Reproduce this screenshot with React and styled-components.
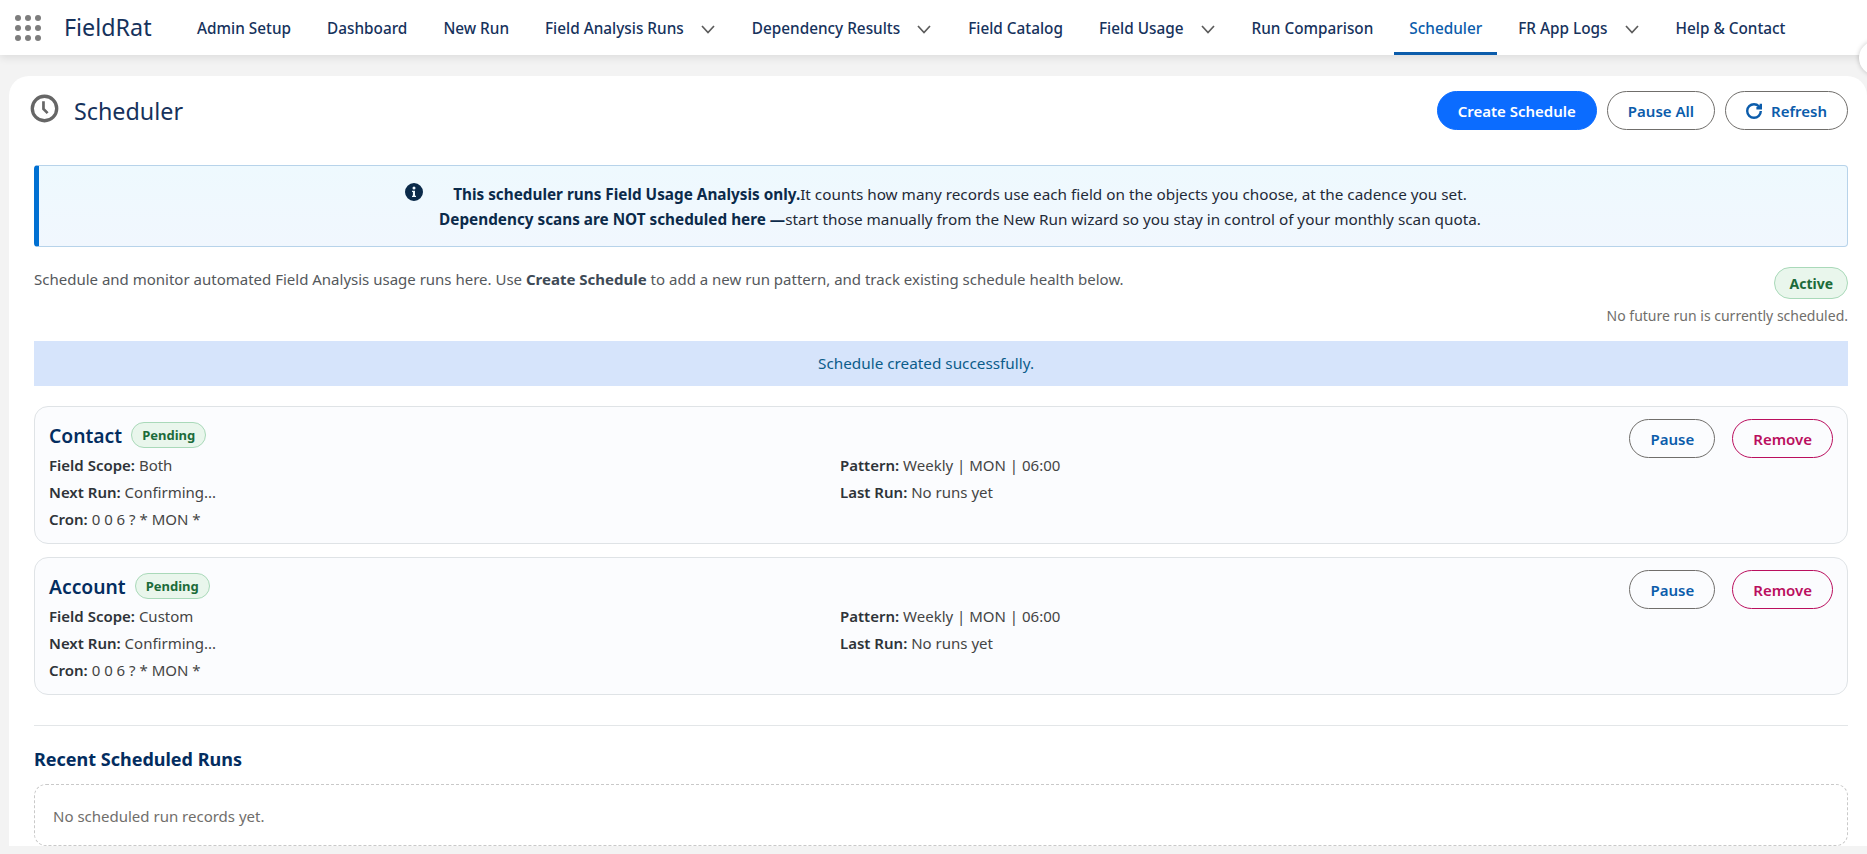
import styled, { createGlobalStyle } from 'styled-components';

const GlobalStyle = createGlobalStyle`
  html, body {
    margin: 0;
    height: 100%;
    overflow: hidden;
  }
  body {
    background: #f3f3f3;
    font-family: "Noto Sans", "Open Sans", sans-serif;
    font-size: 15px;
    color: #181818;
  }
  * {
    box-sizing: border-box;
  }
`;

const TopBar = styled.header`
  display: flex;
  align-items: center;
  height: 55px;
  padding-left: 15px;
  background: #ffffff;
  box-shadow: 0 3px 8px rgba(0, 0, 0, 0.09);
`;

const AppLauncher = styled.svg`
  width: 26px;
  height: 26px;
  margin-right: 23px;
  fill: #7d7d7d;
`;

const AppName = styled.span`
  width: 118px;
  font-size: 23.3px;
  line-height: 1;
  color: #16325c;
`;

const NavList = styled.nav`
  display: flex;
  align-items: stretch;
  height: 55px;
`;

const NavItem = styled.a`
  display: flex;
  align-items: center;
  gap: 16px;
  padding: 0 15px;
  margin-right: 6px;
  font-size: 15.33px;
  font-weight: 500;
  color: ${(p) => (p.$active ? '#0b5cab' : '#16325c')};
  box-shadow: ${(p) => (p.$active ? 'inset 0 -3px 0 #0b5cab' : 'none')};
  white-space: nowrap;

  svg {
    width: 16px;
    height: 16px;
    color: #5c5c5c;
    margin-top: 3px;
  }
`;

const EdgeHandle = styled.div`
  position: fixed;
  top: 41px;
  right: -26px;
  width: 34px;
  height: 34px;
  border-radius: 50%;
  background: #ffffff;
  box-shadow: 0 0 5px rgba(0, 0, 0, 0.22);
`;

const Panel = styled.main`
  margin: 21px 0 0 9px;
  padding: 15px 19px 0 25px;
  background: #ffffff;
  border-radius: 20px 20px 0 0;
`;

const PanelHeader = styled.div`
  display: flex;
  align-items: center;
  justify-content: space-between;
  margin-bottom: 35px;
`;

const TitleGroup = styled.div`
  display: flex;
  align-items: center;
  gap: 15px;
  margin-left: -4px;
`;

const ClockIcon = styled.svg`
  width: 29px;
  height: 29px;
  margin-top: -4px;
`;

const PageTitle = styled.h1`
  margin: 0;
  font-size: 23.3px;
  font-weight: 400;
  color: #16325c;
`;

const ButtonRow = styled.div`
  display: flex;
  align-items: center;
  gap: ${(p) => p.$gap || 10}px;
`;

const CardActions = styled(ButtonRow)`
  align-self: flex-start;
`;

const PillButton = styled.button`
  display: inline-flex;
  align-items: center;
  justify-content: center;
  gap: 9px;
  height: 39px;
  padding: 0 20px;
  border-radius: 20px;
  border: 1px solid ${(p) => (p.$danger ? '#ba0f5e' : p.$primary ? '#0b6cff' : '#706e6b')};
  background: ${(p) => (p.$primary ? '#0b6cff' : 'transparent')};
  color: ${(p) => (p.$primary ? '#ffffff' : p.$danger ? '#ba0f5e' : '#0b5cab')};
  font-family: inherit;
  font-size: 15px;
  font-weight: 600;
  white-space: nowrap;
`;

const InfoBanner = styled.div`
  display: flex;
  justify-content: center;
  gap: 16px;
  height: 82px;
  padding-top: 16px;
  border: 1px solid #b7d3ea;
  border-left: 5px solid #0070d2;
  border-radius: 4px;
  background: linear-gradient(180deg, #eef9fe, #f1f7fe);
  color: #1f2a37;
  font-size: 15.3px;
  line-height: 25px;
  text-align: center;
`;

const InfoIcon = styled.svg`
  width: 18px;
  height: 18px;
  flex: none;
  fill: #0b2a4a;
  margin-top: 1px;
`;

const Strong = styled.b`
  font-weight: 700;
  color: ${(p) => p.$tone || '#0b2a4a'};
`;

const SummaryRow = styled.div`
  display: flex;
  justify-content: space-between;
  align-items: flex-start;
  height: 94px;
  padding-top: 20px;
`;

const Summary = styled.p`
  margin: 2px 0 0;
  font-size: 15px;
  line-height: 20px;
  color: #54585c;
`;

const StatusColumn = styled.div`
  display: flex;
  flex-direction: column;
  align-items: flex-end;
  gap: 7px;
`;

const Badge = styled.span`
  display: inline-flex;
  align-items: center;
  height: ${(p) => (p.$small ? 26 : 32)}px;
  padding: 0 ${(p) => (p.$small ? 10 : 14)}px;
  border: 1px solid #a9d9b9;
  border-radius: 16px;
  background: #e9f6ec;
  color: #1c6b3a;
  font-size: ${(p) => (p.$small ? 13 : 14)}px;
  font-weight: 700;
`;

const MutedText = styled.span`
  font-size: 14px;
  line-height: 20px;
  color: #706e6b;
`;

const SuccessBanner = styled.div`
  height: 45px;
  margin-bottom: 20px;
  padding-right: 30px;
  background: #d6e4fb;
  color: #0b5c8a;
  font-size: 15.3px;
  line-height: 45px;
  text-align: center;
`;

const ScheduleList = styled.div`
  display: flex;
  flex-direction: column;
  gap: 13px;
`;

const ScheduleCard = styled.article`
  display: flex;
  justify-content: space-between;
  height: 138px;
  padding: 12px 14px 0;
  border: 1px solid #dfe3e6;
  border-radius: 14px;
  background: #fbfcfe;
`;

const CardBody = styled.div`
  flex: 1;
`;

const CardTitleRow = styled.div`
  display: flex;
  align-items: center;
  gap: 9px;
  height: 32px;
`;

const CardTitle = styled.h3`
  margin: 0;
  font-size: 19.3px;
  font-weight: 600;
  color: #032d60;
`;

const DetailGrid = styled.div`
  display: grid;
  grid-template-columns: 791px 1fr;
  grid-auto-rows: 27px;
  font-size: 15px;
  color: #444444;
  align-items: center;
`;

const Label = styled.b`
  font-weight: 600;
  color: #2e3338;
`;

const Divider = styled.hr`
  margin: 30px 0 20px;
  border: none;
  border-top: 1px solid #e3e6e8;
`;

const SectionTitle = styled.h2`
  margin: 0 0 12px;
  font-size: 18px;
  line-height: 26px;
  font-weight: 700;
  color: #032d60;
`;

const EmptyBox = styled.div`
  height: 62px;
  padding: 0 18px;
  border: 1px dashed #c9c9c9;
  border-radius: 12px;
  color: #706e6b;
  font-size: 15px;
  line-height: 62px;
`;

const Chevron = () => (
  <svg viewBox="0 0 16 16" fill="none" stroke="currentColor" strokeWidth="1.7">
    <path d="M2 5l6 6.5L14 5" />
  </svg>
);

const NAV_ITEMS = [
  { label: 'Admin Setup' },
  { label: 'Dashboard' },
  { label: 'New Run' },
  { label: 'Field Analysis Runs', menu: true },
  { label: 'Dependency Results', menu: true },
  { label: 'Field Catalog' },
  { label: 'Field Usage', menu: true },
  { label: 'Run Comparison' },
  { label: 'Scheduler', active: true },
  { label: 'FR App Logs', menu: true },
  { label: 'Help & Contact' },
];

const SCHEDULES = [
  { name: 'Contact', scope: 'Both' },
  { name: 'Account', scope: 'Custom' },
];

export default function App() {
  return (
    <>
      <GlobalStyle />
      <TopBar>
        <AppLauncher viewBox="0 0 26 26">
          {[3, 13, 23].map((cy) =>
            [3, 13, 23].map((cx) => <circle key={`${cx}-${cy}`} cx={cx} cy={cy} r="3" />)
          )}
        </AppLauncher>
        <AppName>FieldRat</AppName>
        <NavList>
          {NAV_ITEMS.map((item) => (
            <NavItem key={item.label} $active={item.active}>
              {item.label}
              {item.menu && <Chevron />}
            </NavItem>
          ))}
        </NavList>
      </TopBar>
      <EdgeHandle />
      <Panel>
        <PanelHeader>
          <TitleGroup>
            <ClockIcon viewBox="0 0 28 28" fill="none" stroke="#666666">
              <circle cx="14" cy="14" r="11.8" strokeWidth="3.2" />
              <path d="M13 7v7.5l4 4" strokeWidth="2.6" />
            </ClockIcon>
            <PageTitle>Scheduler</PageTitle>
          </TitleGroup>
          <ButtonRow>
            <PillButton $primary>Create Schedule</PillButton>
            <PillButton>Pause All</PillButton>
            <PillButton>
              <svg width="16" height="16" viewBox="2 2 20 20" fill="none" stroke="currentColor" strokeWidth="3">
                <path d="M20.5 12a8.5 8.5 0 1 1-8.5-8.5c2.4 0 4.6 1 6.2 2.6L20.5 8.5" />
                <path d="M20.5 3v5.5H15" />
              </svg>
              Refresh
            </PillButton>
          </ButtonRow>
        </PanelHeader>

        <InfoBanner>
          <InfoIcon viewBox="0 0 18 18">
            <path d="M9 0a9 9 0 1 0 0 18A9 9 0 0 0 9 0zm0 3.4a1.5 1.5 0 1 1 0 3 1.5 1.5 0 0 1 0-3zM11 14H7v-1.2h.9V9H7V7.8h3v5h1z" />
          </InfoIcon>
          <div>
            <Strong>This scheduler runs Field Usage Analysis only.</Strong>
            It counts how many records use each field on the objects you choose, at the cadence you set.
            <br />
            <Strong>Dependency scans are NOT scheduled here —</Strong>
            start those manually from the New Run wizard so you stay in control of your monthly scan quota.
          </div>
        </InfoBanner>

        <SummaryRow>
          <Summary>
            Schedule and monitor automated Field Analysis usage runs here. Use{' '}
            <Strong $tone="#3e4a56">Create Schedule</Strong> to add a new run pattern, and track existing
            schedule health below.
          </Summary>
          <StatusColumn>
            <Badge>Active</Badge>
            <MutedText>No future run is currently scheduled.</MutedText>
          </StatusColumn>
        </SummaryRow>

        <SuccessBanner>Schedule created successfully.</SuccessBanner>

        <ScheduleList>
          {SCHEDULES.map((schedule) => (
            <ScheduleCard key={schedule.name}>
              <CardBody>
                <CardTitleRow>
                  <CardTitle>{schedule.name}</CardTitle>
                  <Badge $small>Pending</Badge>
                </CardTitleRow>
                <DetailGrid>
                  <div><Label>Field Scope:</Label> {schedule.scope}</div>
                  <div><Label>Pattern:</Label> Weekly | MON | 06:00</div>
                  <div><Label>Next Run:</Label> Confirming...</div>
                  <div><Label>Last Run:</Label> No runs yet</div>
                  <div><Label>Cron:</Label> 0 0 6 ? * MON *</div>
                </DetailGrid>
              </CardBody>
              <CardActions $gap={17}>
                <PillButton>Pause</PillButton>
                <PillButton $danger>Remove</PillButton>
              </CardActions>
            </ScheduleCard>
          ))}
        </ScheduleList>

        <Divider />
        <SectionTitle>Recent Scheduled Runs</SectionTitle>
        <EmptyBox>No scheduled run records yet.</EmptyBox>
      </Panel>
    </>
  );
}
